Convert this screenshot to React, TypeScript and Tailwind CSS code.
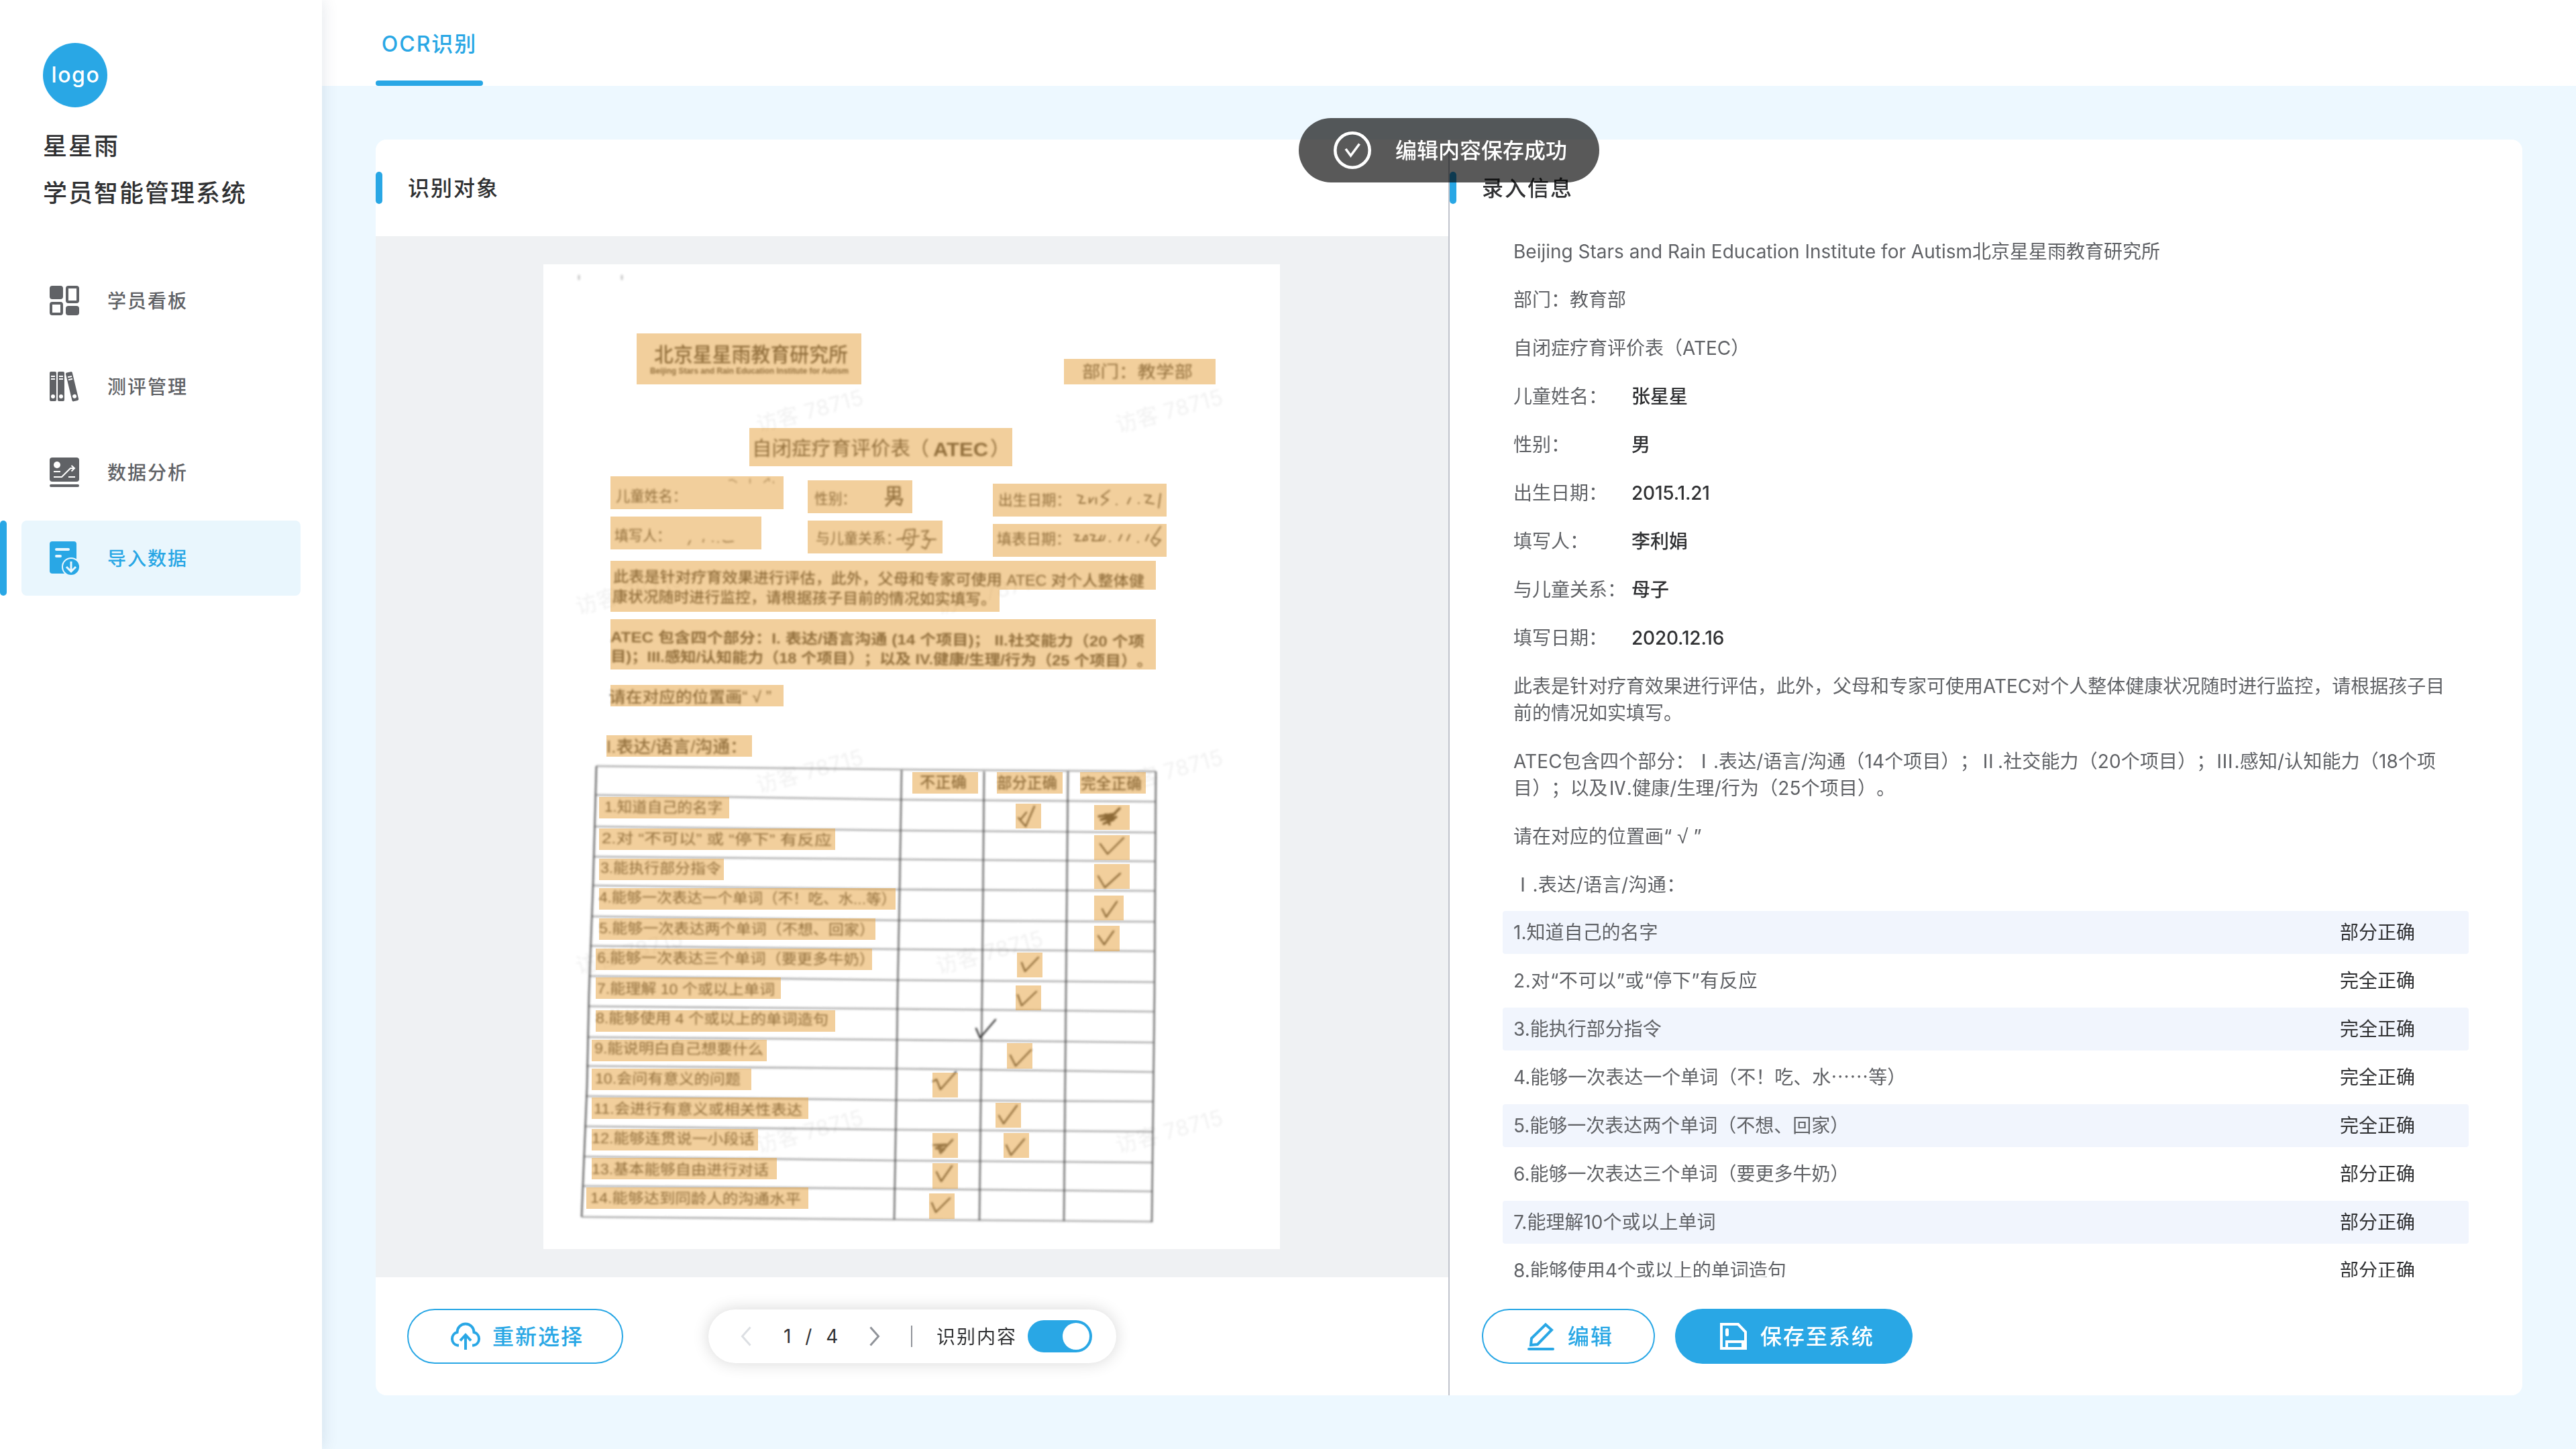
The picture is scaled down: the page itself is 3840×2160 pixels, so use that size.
import type { ReactNode } from "react";

const BASE = "font-['Inter','Noto_Sans_CJK_SC',sans-serif] [text-spacing-trim:space-all]";

/* ---------- icons ---------- */

function BoardIcon() {
  return (
    <svg width="48" height="48" viewBox="0 0 48 48" className="shrink-0">
      <rect x="2" y="2" width="20" height="20" rx="4" fill="currentColor" />
      <rect x="28" y="4" width="16" height="22" rx="2" fill="none" stroke="currentColor" strokeWidth="4" />
      <rect x="4" y="28" width="16" height="16" rx="2" fill="none" stroke="currentColor" strokeWidth="4" />
      <rect x="26" y="32" width="20" height="14" rx="4" fill="currentColor" />
    </svg>
  );
}

function Binder() {
  return (
    <>
      <rect x="0" y="0" width="10" height="44" rx="2" fill="currentColor" />
      <path d="M2 7H8M2 11H8" stroke="#fff" strokeWidth="2" />
      <circle cx="5" cy="37" r="3" fill="#fff" />
    </>
  );
}

function BindersIcon() {
  return (
    <svg width="48" height="48" viewBox="0 0 48 48" className="shrink-0">
      <g transform="translate(2 2)"><Binder /></g>
      <g transform="translate(14 2)"><Binder /></g>
      <g transform="translate(25.6 4) rotate(-13.5)"><Binder /></g>
    </svg>
  );
}

function AnalysisIcon() {
  return (
    <svg width="48" height="48" viewBox="0 0 48 48" className="shrink-0">
      <rect x="2" y="2" width="44" height="36" rx="4" fill="currentColor" />
      <rect x="2" y="42" width="44" height="4" rx="2" fill="currentColor" />
      <circle cx="13" cy="13" r="5" fill="#fff" />
      <path d="M8 23H18M8 31H20L33 18H38M30 31H40M34.5 14L39 18L34.5 22.5" fill="none" stroke="#fff" strokeWidth="2" />
    </svg>
  );
}

function ImportIcon() {
  return (
    <svg width="48" height="54" viewBox="0 0 48 54" className="shrink-0">
      <rect x="2" y="2" width="40" height="48" rx="4" fill="currentColor" />
      <path d="M12 14H30M12 24H18" stroke="#e9f6fd" strokeWidth="4" strokeLinecap="round" />
      <circle cx="34" cy="40" r="13" fill="currentColor" stroke="#e9f6fd" strokeWidth="2" />
      <path d="M34 32V46M27 40L34 47L41 40" fill="none" stroke="#e9f6fd" strokeWidth="3" />
    </svg>
  );
}

function CloudUploadIcon() {
  return (
    <svg width="48" height="44" viewBox="0 0 48 44" className="shrink-0" fill="none" stroke="currentColor" strokeWidth="4">
      <path d="M14 35.5H12A10 10 0 0 1 11.5 16A12.5 12.5 0 0 1 36.5 16A10 10 0 0 1 36 35.500H34" />
      <path d="M24 42V20M16 28.500L24 20L32 28.500" />
    </svg>
  );
}

function PencilIcon() {
  return (
    <svg width="40" height="42" viewBox="0 0 40 42" className="shrink-0" fill="none" stroke="currentColor">
      <path d="M5 34L6 24L27 3.500L36 11.500L15 33Z" strokeWidth="4" />
      <path d="M2 40H38" strokeWidth="4" strokeLinecap="round" />
    </svg>
  );
}

function SaveIcon() {
  return (
    <svg width="40" height="40" viewBox="0 0 40 40" className="shrink-0" fill="none" stroke="currentColor" strokeWidth="4">
      <path d="M2 2H27L38 13.500V38H2Z" />
      <path d="M10 38V28H34V38" />
      <path d="M10.500 10.500V17.500" strokeWidth="5" strokeLinecap="round" />
    </svg>
  );
}

/* ---------- sidebar ---------- */

const NAV: { label: string; icon: ReactNode; active?: boolean }[] = [
  { label: "学员看板", icon: <BoardIcon /> },
  { label: "测评管理", icon: <BindersIcon /> },
  { label: "数据分析", icon: <AnalysisIcon /> },
  { label: "导入数据", icon: <ImportIcon />, active: true },
];

function Sidebar() {
  return (
    <aside className="relative z-10 flex w-[480px] shrink-0 flex-col bg-white shadow-[0_0_24px_rgba(0,40,80,0.12)]">
      <div className="mt-16 ml-16 flex size-24 items-center justify-center rounded-full bg-[#29a7e5] pl-0.5 text-[32px] font-medium tracking-[1.6px] text-white">
        logo
      </div>
      <div className="mt-[23px] ml-16 text-[36px] leading-[70px] font-medium tracking-[2px] text-[#303133]">
        <div>星星雨</div>
        <div>学员智能管理系统</div>
      </div>
      <nav className="mt-[69px] flex flex-col gap-4">
        {NAV.map((n) => (
          <div key={n.label} className="flex h-28">
            <div className={n.active ? "w-2.5 rounded-[5px] bg-[#29a7e5]" : "w-2.5"} />
            <div
              className={
                n.active
                  ? "ml-[22px] flex w-[416px] items-center gap-10 rounded-lg bg-[#e9f6fd] pl-10 text-[#29a7e5]"
                  : "ml-[22px] flex w-[416px] items-center gap-10 pl-10 text-[#606266]"
              }
            >
              {n.icon}
              <span className="pt-px text-[28px] font-medium tracking-[2px]">{n.label}</span>
            </div>
          </div>
        ))}
      </nav>
    </aside>
  );
}

/* ---------- scanned page ---------- */

type Line = [text: string, x1: number, x2: number, cy: number, size: number, weight?: number, slope?: number];

const PRINTED: Line[] = [
  ["北京星星雨教育研究所", 975, 1264, 528, 30, 500],
  ["Beijing Stars and Rain Education Institute for Autism", 969, 1265, 552, 13, 700],
  ["部门：教学部", 1613, 1778, 554, 25],
  ["自闭症疗育评价表", 1121, 1357, 668, 29, 400],
  ["（", 1355, 1385, 668, 29, 400],
  ["ATEC", 1391, 1473, 669, 29, 700],
  ["）", 1476, 1506, 668, 29, 400],
  ["儿童姓名：", 918, 1024, 739, 22],
  ["性别：", 1214, 1276, 743, 22],
  ["出生日期：", 1488, 1596, 745, 22],
  ["填写人：", 916, 1000, 798, 22],
  ["与儿童关系：", 1216, 1342, 802, 22],
  ["填表日期：", 1486, 1596, 803, 22],
  ["此表是针对疗育效果进行评估，此外，父母和专家可使用 ATEC 对个人整体健", 914, 1706, 859, 23, 500, 0.5],
  ["康状况随时进行监控，请根据孩子目前的情况如实填写。", 913, 1485, 889, 23, 500, 0.4],
  ["ATEC 包含四个部分：I. 表达/语言沟通 (14 个项目)； II.社交能力（20 个项", 910, 1706, 949, 22, 600, 0.5],
  ["目)；III.感知/认知能力（18 个项目）；以及 IV.健康/生理/行为（25 个项目）。", 910, 1718, 978, 22, 600, 0.5],
  ["请在对应的位置画“ √ ”", 908, 1150, 1038, 23, 500],
  ["I.表达/语言/沟通：", 904, 1114, 1113, 25, 500],
  ["不正确", 1371, 1441, 1165, 23, 500],
  ["部分正确", 1486, 1576, 1166, 23, 500],
  ["完全正确", 1611, 1702, 1167, 23, 500],
  ["1.知道自己的名字", 901, 1077, 1202, 22, 400, 0.5],
  ["2.对 “不可以” 或 “停下” 有反应", 897, 1240, 1249, 22, 400, 0.5],
  ["3.能执行部分指令", 895, 1075, 1293, 22, 400, 0.5],
  ["4.能够一次表达一个单词（不！吃、水...等）", 893, 1336, 1337, 22, 400, 0.4],
  ["5.能够一次表达两个单词（不想、回家）", 893, 1304, 1383, 22, 400, 0.4],
  ["6.能够一次表达三个单词（要更多牛奶）", 890, 1304, 1427, 22, 400, 0.4],
  ["7.能理解 10 个或以上单词", 890, 1155, 1473, 22, 400, 0.4],
  ["8.能够使用 4 个或以上的单词造句", 888, 1235, 1517, 22, 400, 0.4],
  ["9.能说明白自己想要什么", 886, 1138, 1562, 22, 400, 0.4],
  ["10.会问有意义的问题", 887, 1104, 1607, 22, 400, 0.4],
  ["11.会进行有意义或相关性表达", 885, 1196, 1652, 22, 400, 0.4],
  ["12.能够连贯说一小段话", 882, 1125, 1696, 22, 400, 0.4],
  ["13.基本能够自由进行对话", 882, 1146, 1742, 22, 400, 0.4],
  ["14.能够达到同龄人的沟通水平", 880, 1194, 1785, 22, 400, 0.4],
];

/* y at the left border, at the first column rule and at the right border */
const RULES: [number, number, number][] = [
  [1142, 1147, 1150], [1185, 1192, 1195], [1232, 1238, 1241], [1277, 1281, 1284],
  [1320, 1326, 1328], [1366, 1372, 1374], [1410, 1415, 1418], [1455, 1461, 1464],
  [1500, 1504, 1508], [1546, 1550, 1554], [1589, 1593, 1598], [1634, 1640, 1642],
  [1679, 1684, 1687], [1724, 1730, 1733], [1768, 1772, 1776], [1814, 1818, 1821],
];

const TICKS = [
  "M1518 1219L1529 1232L1542 1202M1521 1222L1530 1211",
  "M1640 1258L1651 1273L1675 1249",
  "M1637 1306L1647 1323L1670 1302",
  "M1643 1355L1649 1367L1665 1344",
  "M1637 1395L1646 1408L1660 1388",
  "M1523 1435L1528 1448L1548 1427",
  "M1517 1483L1523 1499L1545 1478",
  "M1455 1533L1461 1547L1484 1520",
  "M1506 1573L1514 1589L1537 1565",
  "M1391 1612L1396 1609L1402 1624L1425 1598",
  "M1489 1663L1496 1675L1516 1648",
  "M1500 1707L1507 1722L1527 1698",
  "M1396 1747L1403 1761L1419 1738",
  "M1389 1793L1395 1807L1416 1786",
];

/* recognised regions: x1, y1, x2, y2 */
const REGIONS: [number, number, number, number][] = [
  [949, 497, 1284, 573], [1586, 535, 1812, 573], [1117, 638, 1509, 695],
  [910, 710, 1168, 759], [1204, 716, 1360, 765], [1480, 721, 1739, 770],
  [910, 770, 1135, 819], [1204, 776, 1405, 825], [1480, 781, 1739, 830],
  [910, 836, 1723, 879], [910, 879, 1490, 912], [910, 923, 1723, 998],
  [910, 1021, 1168, 1053], [904, 1096, 1121, 1128],
  [1360, 1151, 1458, 1183], [1486, 1151, 1584, 1183], [1610, 1151, 1708, 1183],
  [893, 1188, 1087, 1220], [893, 1235, 1245, 1267], [893, 1280, 1079, 1312],
  [893, 1324, 1335, 1356], [893, 1369, 1305, 1401], [888, 1414, 1300, 1446],
  [888, 1457, 1164, 1489], [888, 1506, 1245, 1538], [882, 1550, 1143, 1582],
  [882, 1593, 1120, 1625], [882, 1636, 1205, 1668], [882, 1683, 1130, 1715],
  [882, 1726, 1158, 1758], [874, 1770, 1205, 1802],
  [1514, 1198, 1552, 1235], [1631, 1200, 1684, 1237], [1631, 1245, 1684, 1282],
  [1631, 1288, 1684, 1325], [1631, 1335, 1675, 1372], [1631, 1380, 1669, 1418],
  [1516, 1420, 1554, 1457], [1514, 1469, 1552, 1506], [1501, 1555, 1539, 1593],
  [1390, 1599, 1428, 1636], [1484, 1644, 1522, 1681], [1390, 1689, 1428, 1726],
  [1496, 1689, 1534, 1726], [1390, 1734, 1428, 1772], [1385, 1779, 1423, 1817],
];

const WATERMARKS: [number, number][] = [
  [1207, 613], [1743, 613], [938, 884], [1475, 884], [1207, 1150], [1743, 1150],
  [938, 1420], [1475, 1420], [1207, 1687], [1743, 1687],
];

function ScannedPage() {
  return (
    <svg width="1098" height="1468" viewBox="810 394 1098 1468" className="bg-white">
      <defs>
        <filter id="scan" x="-2%" y="-2%" width="104%" height="104%">
          <feGaussianBlur stdDeviation="1.4" />
        </filter>
      </defs>
      <g fill="#000" fillOpacity="0.055" fontSize="32" filter="url(#scan)">
        {WATERMARKS.map(([x, y]) => (
          <text key={`${x}-${y}`} x={x} y={y + 11} textAnchor="middle" textLength="164" transform={`rotate(-15 ${x} ${y})`}>
            访客 78715
          </text>
        ))}
      </g>
      <g filter="url(#scan)">
        <g fill="#333" fillOpacity="0.95" className="font-['Liberation_Sans','Noto_Sans_CJK_SC',sans-serif]">
          {PRINTED.map(([t, x1, x2, cy, size, weight = 400, slope = 0]) => (
            <text
              key={t + cy}
              x={x1}
              y={cy + size * 0.37}
              fontSize={size}
              fontWeight={weight}
              textLength={x2 - x1}
              lengthAdjust="spacingAndGlyphs"
              transform={`rotate(${slope} ${x1} ${cy})`}
              xmlSpace="preserve"
            >
              {t}
            </text>
          ))}
        </g>
        <g fill="none" stroke="#444" strokeWidth="2.6">
          {RULES.map(([a, b, c], i) => (
            <path key={a} strokeOpacity="0.45" d={`M${889 - i * 1.45} ${a}L${1344 - i * 0.7} ${b}L${1723 - i * 0.4} ${c}`} />
          ))}
          <path strokeOpacity="0.8" d="M889 1142L884 1320L878 1480L875 1620L867 1814" />
          <path strokeOpacity="0.75" d="M1344 1148L1341 1330L1338 1480L1336 1640L1333 1818" />
          <path strokeOpacity="0.75" d="M1467 1150L1464 1480L1460 1819" />
          <path strokeOpacity="0.75" d="M1592 1150L1589 1480L1586 1820" />
          <path strokeOpacity="0.75" d="M1723 1150L1721 1480L1717 1822" />
        </g>
        <g fill="none" stroke="#333" strokeWidth="2.4" strokeLinecap="round" strokeLinejoin="round">
          {TICKS.map((d) => (
            <path key={d} d={d} />
          ))}
          <path strokeWidth="3.500" d="M1638 1217L1662 1213L1641 1222L1664 1218L1645 1228L1660 1222L1648 1214L1654 1229M1658 1216L1669 1205" />
          <path strokeWidth="3" strokeOpacity="0.85" d="M1392 1707L1410 1706L1395 1712L1408 1713L1402 1719L1399 1709M1403 1717L1420 1699" />
        </g>
        {/* handwriting */}
        <g fill="none" stroke="#444" strokeWidth="2" strokeLinecap="round" strokeLinejoin="round">
          <path d="M1087 716L1092 715L1098 719M1118 714V720M1139 719L1146 713L1147 717M1153 718V720" strokeOpacity="0.55" />
          <path d="M1324 726H1341V740H1324ZM1324 733H1341M1332 726V742M1320 744H1345L1342 753L1336 750M1334 740L1321 754" strokeWidth="2.600" />
          <path d="M1606 738L1614 740L1609 750L1618 750M1624 742V750L1630 742M1634 742V751M1654 731L1642 740L1652 745L1642 753M1664 752H1665M1681 751L1685 742M1697 750H1698M1706 738L1716 739L1708 749L1720 751M1730 736L1727 757" />
          <path d="M1026 812L1029 806M1048 808L1049 804M1062 807H1063M1070 808H1071M1078 806L1082 808L1093 807" strokeOpacity="0.8" />
          <path d="M1346 806L1350 790L1364 789L1361 812L1349 810M1337 804L1370 799M1354 795L1357 797M1353 804L1356 806M1360 812L1352 820M1374 792L1384 791L1378 799L1386 806L1380 818L1374 815M1376 804H1395" />
          <path d="M1601 797L1608 798L1603 806L1611 806M1618 798L1614 806L1621 805L1620 798M1625 797L1632 798L1628 806L1636 806M1642 798L1638 806L1645 805L1647 798M1654 807H1655M1668 806L1672 797M1680 806L1684 797M1696 808H1697M1708 806L1712 797M1730 785L1716 806L1722 814L1730 805L1720 802" />
          <path d="M863 411V416M927 411V416" strokeWidth="3" strokeOpacity="0.3" />
        </g>
      </g>
      <g fill="#e59f39" fillOpacity="0.5">
        {REGIONS.map(([x1, y1, x2, y2]) => (
          <rect key={`${x1}-${y1}`} x={x1} y={y1} width={x2 - x1} height={y2 - y1} />
        ))}
      </g>
    </svg>
  );
}

/* ---------- panels ---------- */

function PanelHeader({ title }: { title: string }) {
  return (
    <div className="flex h-36 shrink-0 items-center">
      <div className="h-12 w-2.5 rounded-[5px] bg-[#29a7e5]" />
      <h2 className="ml-[38px] pt-0.5 text-[32px] font-medium tracking-[2px] text-[#303133]">{title}</h2>
    </div>
  );
}

function Pager() {
  return (
    <div className="flex h-20 w-[608px] items-center rounded-full bg-white pl-12 text-[28px] text-[#303133] shadow-[0_0_24px_rgba(0,0,0,0.16)]">
      <svg width="16" height="30" viewBox="0 0 16 30" fill="none" stroke="#dcdfe3" strokeWidth="3">
        <path d="M14.500 1.500L2.500 15L14.500 28.500" />
      </svg>
      <span className="ml-12 w-32 tracking-[2px] [word-spacing:9px]">1 / 4</span>
      <svg width="16" height="30" viewBox="0 0 16 30" fill="none" stroke="#909399" strokeWidth="3">
        <path d="M1.500 1.500L13.500 15L1.500 28.500" />
      </svg>
      <div className="ml-[46px] h-8 w-0.5 bg-[#909399]" />
      <span className="ml-9 pt-0.5 tracking-[2px]">识别内容</span>
      <div className="ml-4 flex h-12 w-24 items-center justify-end rounded-full bg-[#29a7e5] p-1">
        <div className="size-10 rounded-full bg-white" />
      </div>
    </div>
  );
}

const FIELDS: [string, string][] = [
  ["儿童姓名：", "张星星"],
  ["性别：", "男"],
  ["出生日期：", "2015.1.21"],
  ["填写人：", "李利娟"],
  ["与儿童关系：", "母子"],
  ["填写日期：", "2020.12.16"],
];

function Cjk({ children }: { children: ReactNode }) {
  return <span className="font-['Noto_Sans_CJK_SC',sans-serif] leading-none">{children}</span>;
}

const ANSWERS: [ReactNode, string][] = [
  ["1.知道自己的名字", "部分正确"],
  [<span className="tracking-[0.6px]">2.对“不可以”或“停下”有反应</span>, "完全正确"],
  ["3.能执行部分指令", "完全正确"],
  [<>4.能够一次表达一个单词（不！吃、水<Cjk>……</Cjk>等）</>, "完全正确"],
  ["5.能够一次表达两个单词（不想、回家）", "完全正确"],
  ["6.能够一次表达三个单词（要更多牛奶）", "部分正确"],
  ["7.能理解10个或以上单词", "部分正确"],
  ["8.能够使用4个或以上的单词造句", "部分正确"],
];

function RecordForm() {
  return (
    <div className="h-[1552px] overflow-hidden pt-[3px] pr-[80px] pl-[79px] text-[28px] leading-10 whitespace-nowrap text-[#606266]">
      <div className="flex flex-col gap-8 pl-4">
        <p>Beijing Stars and Rain Education Institute for Autism北京星星雨教育研究所</p>
        <p>部门：教育部</p>
        <p>自闭症疗育评价表（ATEC）</p>
        {FIELDS.map(([k, v]) => (
          <div key={k} className="flex h-10">
            <span className="w-44">{k}</span>
            <span className={/\d/.test(v) ? "font-medium tracking-[-0.2px] text-[#303133]" : "font-medium text-[#303133]"}>{v}</span>
          </div>
        ))}
        <p>
          此表是针对疗育效果进行评估，此外，父母和专家可使用ATEC对个人整体健康状况随时进行监控，请根据孩子目
          <br />
          前的情况如实填写。
        </p>
        <p className="tracking-[0.13px]">
          ATEC包含四个部分：<Cjk>Ⅰ</Cjk>.表达/语言/沟通（14个项目）；<Cjk>Ⅱ</Cjk>.社交能力（20个项目）；<Cjk>Ⅲ</Cjk>.感知/认知能力（18个项
          <br />
          目）；以及<Cjk>Ⅳ</Cjk>.健康/生理/行为（25个项目）。
        </p>
        <p className="h-10">
          请在对应的位置画“
          <span className="inline-block w-8 text-center font-['Liberation_Sans'] text-[30px] leading-none">√</span>”
        </p>
        <p className="tracking-[0.4px]"><Cjk>Ⅰ</Cjk>.表达/语言/沟通：</p>
      </div>
      <div className="mt-[19px] flex flex-col gap-2">
        {ANSWERS.map(([q, a], i) => (
          <div key={i} className="flex h-16 shrink-0 items-center justify-between rounded pr-20 pl-4 odd:bg-[#f1f5fd]">
            <span>{q}</span>
            <span className="text-[#303133]">{a}</span>
          </div>
        ))}
      </div>
    </div>
  );
}

const OUTLINE =
  "flex h-[82px] items-center rounded-full border-2 border-[#29a7e5] text-[32px] font-medium tracking-[2px] text-[#29a7e5]";

export default function App() {
  return (
    <div className={`relative flex h-[2160px] w-[3840px] overflow-hidden bg-[#edf8ff] ${BASE}`}>
      <Sidebar />
      <main className="flex flex-1 flex-col">
        <header className="flex h-32 shrink-0 bg-white pl-20">
          <div className="flex w-40 flex-col items-center">
            <div className="flex h-[120px] items-center pt-[11px] text-[32px] font-medium tracking-[2px] text-[#29a7e5]">
              OCR识别
            </div>
            <div className="h-2 w-40 rounded bg-[#29a7e5]" />
          </div>
        </header>
        <div className="mt-20 ml-20 flex h-[1872px] w-[3200px] overflow-hidden rounded-2xl bg-white">
          <section className="flex w-[1599px] flex-col">
            <PanelHeader title="识别对象" />
            <div className="h-[1552px] shrink-0 bg-[#eff1f3] pt-[42px] pl-[250px]">
              <ScannedPage />
            </div>
            <div className="flex h-44 items-center pl-[47px]">
              <button className={`${OUTLINE} w-[322px] gap-4 pl-[61px]`}>
                <CloudUploadIcon />
                <span className="pt-0.5">重新选择</span>
              </button>
              <div className="ml-[127px]">
                <Pager />
              </div>
            </div>
          </section>
          <div className="w-0.5 shrink-0 bg-[#c0c4cc]" />
          <section className="flex flex-1 flex-col">
            <PanelHeader title="录入信息" />
            <RecordForm />
            <div className="flex h-44 items-center gap-[30px] pl-12">
              <button className={`${OUTLINE} w-[258px] gap-5 pl-[66px]`}>
                <PencilIcon />
                <span className="pt-0.5">编辑</span>
              </button>
              <button className="flex h-[82px] w-[354px] items-center gap-5 rounded-full bg-[#29a7e5] pl-[67px] text-[32px] font-medium tracking-[2px] text-white">
                <SaveIcon />
                <span className="pt-0.5">保存至系统</span>
              </button>
            </div>
          </section>
        </div>
      </main>
      <div className="absolute top-[176px] left-[1936px] z-20 flex h-24 w-[448px] items-center rounded-full bg-black/65 pl-[52px] text-[32px] font-medium text-white">
        <svg width="56" height="56" viewBox="0 0 56 56" fill="none" stroke="currentColor">
          <circle cx="28" cy="28" r="25.700" strokeWidth="4.600" />
          <path d="M18 26L25.500 36L38.500 18.500" strokeWidth="3.600" />
        </svg>
        <span className="ml-9 pt-0.5">编辑内容保存成功</span>
      </div>
    </div>
  );
}
